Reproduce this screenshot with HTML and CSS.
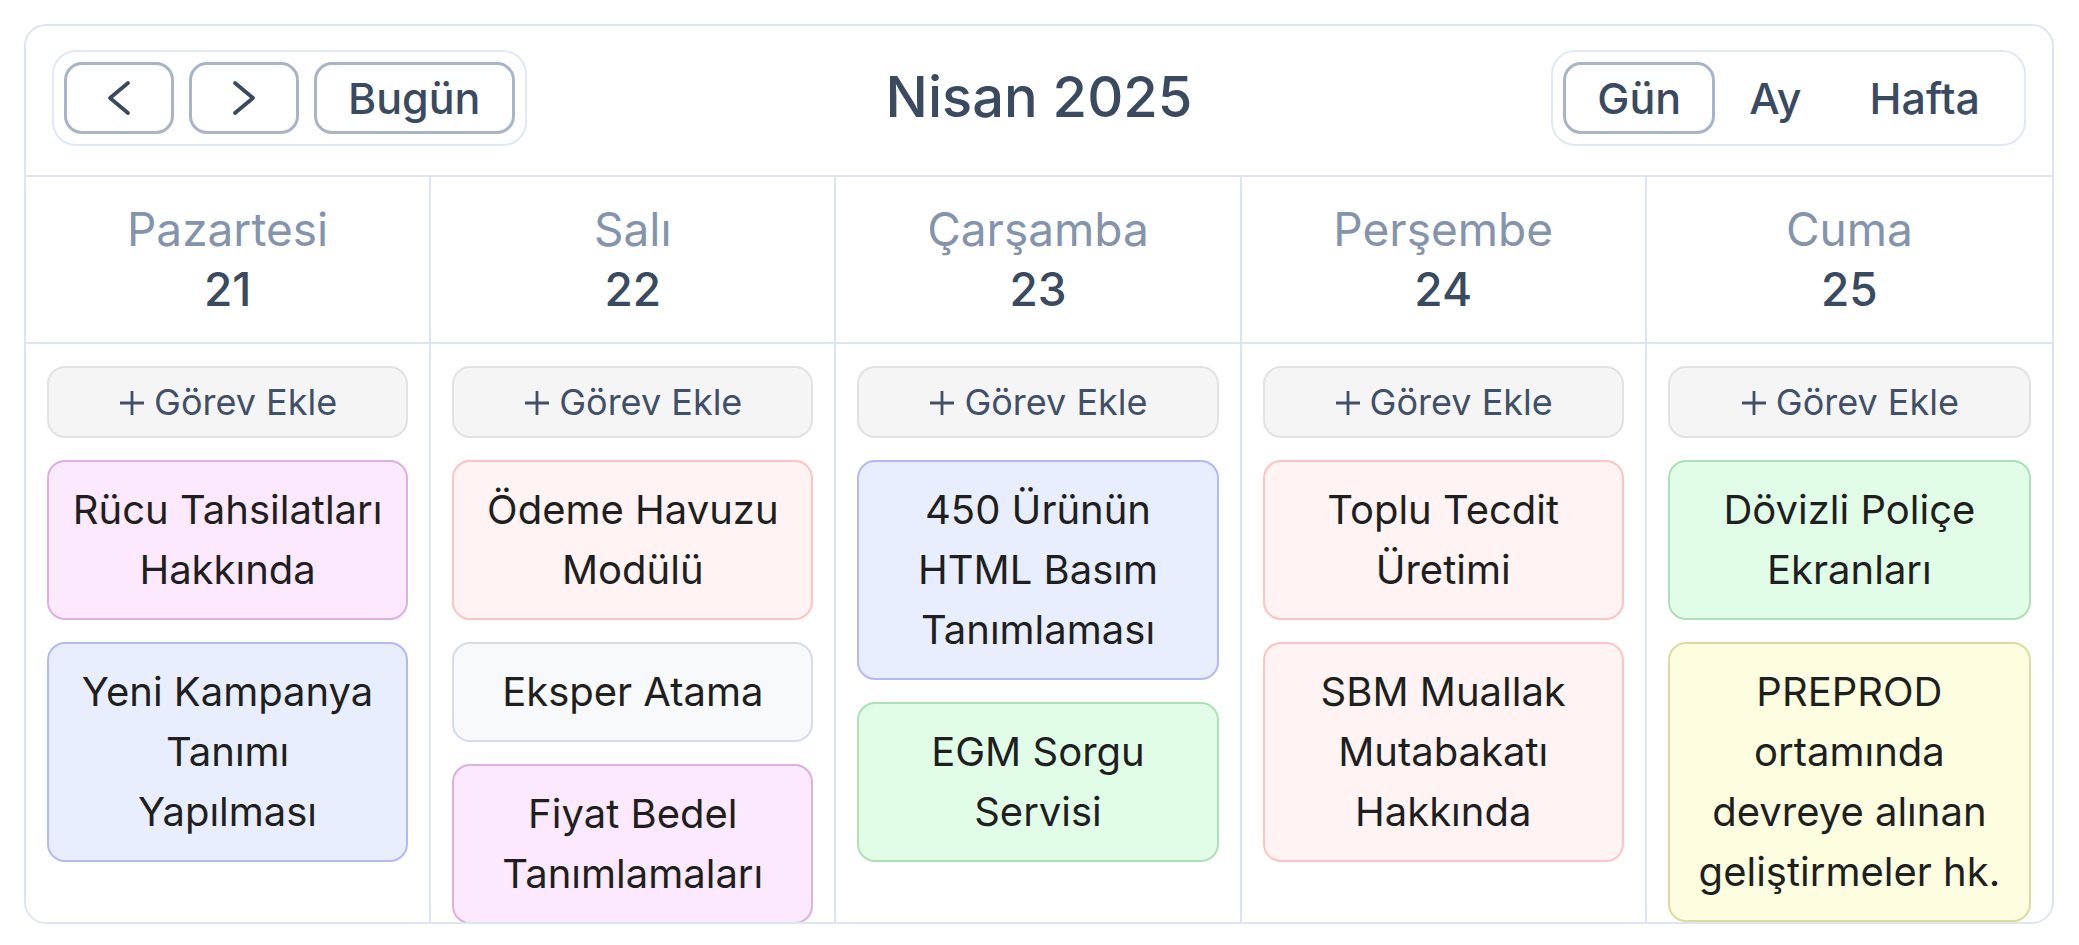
FILE: index.html
```html
<!DOCTYPE html>
<html lang="tr">
<head>
<meta charset="utf-8">
<title>Nisan 2025</title>
<link rel="stylesheet" href="styles.css">
</head>
<body>
<div class="calendar">
  <header class="toolbar">
    <div class="group group-left">
      <button class="btn btn-icon" aria-label="Önceki">
        <svg width="26" height="38" viewBox="0 0 26 38"><path d="M22 4 L4 19 L22 34" fill="none" stroke="#3a4a60" stroke-width="3.8" stroke-linecap="round" stroke-linejoin="round"/></svg>
      </button>
      <button class="btn btn-icon" aria-label="Sonraki">
        <svg width="26" height="38" viewBox="0 0 26 38"><path d="M4 4 L22 19 L4 34" fill="none" stroke="#3a4a60" stroke-width="3.8" stroke-linecap="round" stroke-linejoin="round"/></svg>
      </button>
      <button class="btn">Bugün</button>
    </div>
    <h1 class="title">Nisan 2025</h1>
    <div class="group group-right">
      <button class="btn btn-view active">Gün</button>
      <button class="btn btn-view">Ay</button>
      <button class="btn btn-view">Hafta</button>
    </div>
  </header>

  <div class="days">
    <div class="day"><div class="day-name">Pazartesi</div><div class="day-num">21</div></div>
    <div class="day"><div class="day-name">Salı</div><div class="day-num">22</div></div>
    <div class="day"><div class="day-name">Çarşamba</div><div class="day-num">23</div></div>
    <div class="day"><div class="day-name">Perşembe</div><div class="day-num">24</div></div>
    <div class="day"><div class="day-name">Cuma</div><div class="day-num">25</div></div>
  </div>

  <div class="board">
    <div class="col">
      <button class="add"><svg width="28" height="28" viewBox="0 0 28 28"><path d="M14 2 V26 M2 14 H26" stroke="#3f5068" stroke-width="2.8"/></svg><span>Görev Ekle</span></button>
      <div class="task pink">Rücu Tahsilatları Hakkında</div>
      <div class="task blue">Yeni Kampanya Tanımı Yapılması</div>
    </div>
    <div class="col">
      <button class="add"><svg width="28" height="28" viewBox="0 0 28 28"><path d="M14 2 V26 M2 14 H26" stroke="#3f5068" stroke-width="2.8"/></svg><span>Görev Ekle</span></button>
      <div class="task salmon">Ödeme Havuzu Modülü</div>
      <div class="task gray">Eksper Atama</div>
      <div class="task pink">Fiyat Bedel Tanımlamaları</div>
    </div>
    <div class="col">
      <button class="add"><svg width="28" height="28" viewBox="0 0 28 28"><path d="M14 2 V26 M2 14 H26" stroke="#3f5068" stroke-width="2.8"/></svg><span>Görev Ekle</span></button>
      <div class="task blue">450 Ürünün HTML Basım Tanımlaması</div>
      <div class="task green">EGM Sorgu Servisi</div>
    </div>
    <div class="col">
      <button class="add"><svg width="28" height="28" viewBox="0 0 28 28"><path d="M14 2 V26 M2 14 H26" stroke="#3f5068" stroke-width="2.8"/></svg><span>Görev Ekle</span></button>
      <div class="task salmon">Toplu Tecdit Üretimi</div>
      <div class="task salmon">SBM Muallak Mutabakatı Hakkında</div>
    </div>
    <div class="col">
      <button class="add"><svg width="28" height="28" viewBox="0 0 28 28"><path d="M14 2 V26 M2 14 H26" stroke="#3f5068" stroke-width="2.8"/></svg><span>Görev Ekle</span></button>
      <div class="task green">Dövizli Poliçe Ekranları</div>
      <div class="task yellow">PREPROD ortamında devreye alınan geliştirmeler hk.</div>
    </div>
  </div>
</div>
</body>
</html>
```

FILE: styles.css
```css
* { box-sizing: border-box; }

html, body {
  margin: 0;
  padding: 0;
  background: #ffffff;
}

body {
  padding: 24px 25px 24px 24px;
  font-family: Inter, "Noto Sans", "DejaVu Sans", sans-serif;
  color: #3a4a60;
}

.calendar {
  height: 900px;
  border: 2px solid #dfe5f0;
  border-radius: 22px;
  overflow: hidden;
  display: flex;
  flex-direction: column;
  background: #fff;
}

.toolbar {
  display: grid;
  grid-template-columns: 1fr auto 1fr;
  align-items: center;
  padding: 24px 26px 29px 26px;
  border-bottom: 2px solid #dfe5f0;
}

.group {
  display: flex;
  align-items: center;
  padding: 10px;
  border: 2px solid #e2e8f3;
  border-radius: 24px;
  background: #fff;
}

.group-left {
  justify-self: start;
  gap: 15px;
}

.group-right {
  justify-self: end;
  gap: 0;
}

.btn {
  height: 72px;
  padding: 0 31px;
  border: 3px solid #a9b4c6;
  border-radius: 18px;
  background: #fff;
  font-family: inherit;
  font-size: 43px;
  font-weight: 500;
  color: #3a4a60;
  display: flex;
  align-items: center;
  justify-content: center;
  cursor: pointer;
}

.btn-icon {
  width: 110px;
  padding: 0;
}

.btn-view {
  border-color: transparent;
}

.btn-view.active {
  border-color: #a9b4c6;
}

.title {
  margin: 0;
  font-size: 56px;
  font-weight: 500;
  color: #3a4a60;
  line-height: 1.2;
}

.days,
.board {
  display: grid;
  grid-template-columns: repeat(5, 1fr);
}

.days {
  border-bottom: 2px solid #dfe5f0;
}

.day {
  text-align: center;
  padding: 22px 0 23px;
  border-right: 2px solid #dfe5f0;
}

.day:last-child,
.col:last-child {
  border-right: none;
}

.day-name {
  font-size: 46px;
  line-height: 60px;
  color: #8394ac;
  font-weight: 400;
}

.day-num {
  font-size: 46px;
  line-height: 60px;
  color: #3a4a60;
  font-weight: 500;
}

.board {
  flex: 1;
  min-height: 0;
  overflow: hidden;
}

.col {
  display: flex;
  flex-direction: column;
  gap: 22px;
  padding: 22px 21px;
  border-right: 2px solid #dfe5f0;
  min-height: 0;
}

.add {
  flex: none;
  height: 72px;
  border: 2px solid #e2e2e4;
  border-radius: 18px;
  background: #f5f5f6;
  font-family: inherit;
  font-size: 36px;
  font-weight: 400;
  color: #3f5068;
  display: flex;
  align-items: center;
  justify-content: center;
  gap: 8px;
  cursor: pointer;
}

.add svg {
  margin-top: 2px;
}

.task {
  flex: none;
  border: 2px solid;
  border-radius: 18px;
  padding: 18px 22px;
  text-align: center;
  font-size: 40px;
  line-height: 60px;
  font-weight: 420;
  color: #1f1f1f;
}

.pink   { background: #fce9fd; border-color: #dcb0e0; }
.blue   { background: #e8eefd; border-color: #b3b9f6; }
.salmon { background: #fff4f3; border-color: #fcc4c2; }
.gray   { background: #f8f9fb; border-color: #d6dde9; }
.green  { background: #e1fde7; border-color: #aee0b8; }
.yellow { background: #fdfee0; border-color: #dcdca0; }
```
